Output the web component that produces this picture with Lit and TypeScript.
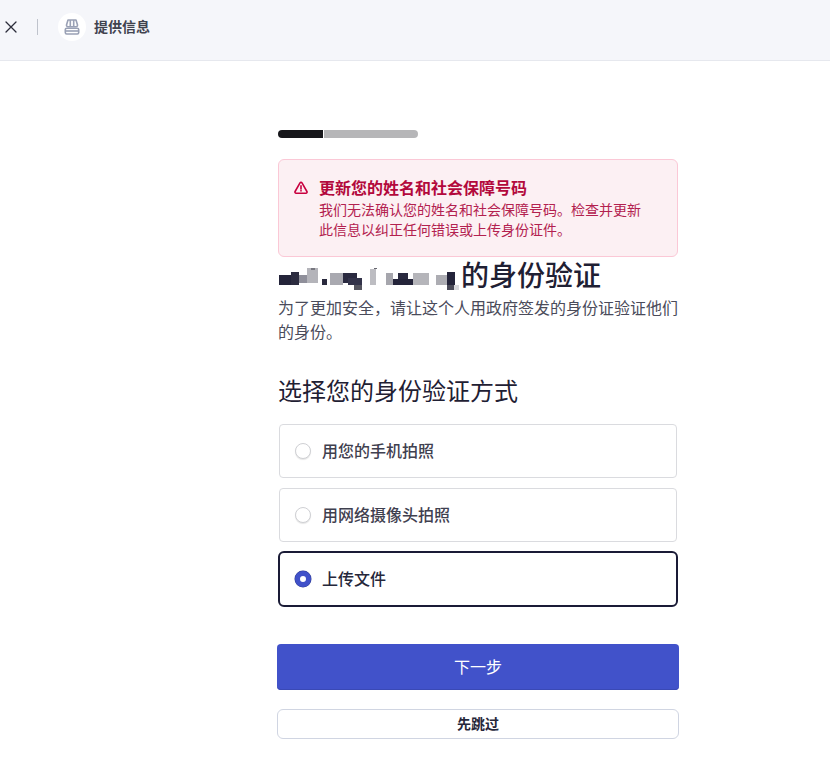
import { LitElement, html, css, svg } from "lit";
import { customElement } from "lit/decorators.js";

const mosaic: [number, number, number, number, string][] = [
  [1, 7, 12, 10, "#24243a"], [13, 4, 8, 13, "#2c2c40"], [21, 7, 8, 8, "#8f8f9a"],
  [29, 0, 11, 15, "#b4b4ba"], [33, 0, 4, 2, "#77777f"], [44, 11, 5, 6, "#2a2a3e"],
  [52, 5, 13, 12, "#a9a9b0"], [65, 5, 14, 10, "#2a2a40"], [70, 10, 14, 7, "#33334a"],
  [76, 17, 8, 5, "#55555f"], [92, 1, 6, 16, "#bdbdc2"], [96, 0, 3, 1, "#66666f"],
  [108, 5, 7, 12, "#a6a6ad"], [115, 11, 20, 6, "#24243a"], [120, 5, 10, 6, "#2a2a40"],
  [135, 5, 16, 12, "#b5b5ba"], [158, 7, 11, 10, "#adadb3"], [169, 4, 8, 13, "#24243a"],
  [169, 17, 7, 5, "#4a4a58"], [176, 17, 5, 5, "#d8d8dc"],
];

@customElement("app-root")
export class AppRoot extends LitElement {
  static styles = css`
    :host {
      display: block;
      min-height: 780px;
      background: #fff;
      color: #1a1b36;
      font-family: "Noto Sans CJK SC", "Noto Sans", sans-serif;
    }
    .top {
      height: 54px;
      padding: 0 0 6px 5px;
      background: #f5f6fa;
      border-bottom: 1px solid #e6e8ee;
      display: flex;
      align-items: center;
    }
    .close { display: block; width: 12px; height: 12px; }
    .sep { width: 1px; height: 16px; background: #bfc3cc; margin: 0 20px 0 20px; }
    .avatar {
      width: 28px; height: 28px; border-radius: 50%; background: #fff;
      display: flex; align-items: center; justify-content: center; margin-right: 8px;
    }
    .top-title { font-size: 14px; font-weight: 600; color: #41434f; line-height: 20px; margin-bottom: 2px; }
    main {
      width: 402px;
      margin-left: 277px;
      padding-top: 69px;
      display: flex;
      flex-direction: column;
    }
    .inner { padding: 0 1px; display: flex; flex-direction: column; }
    .progress { display: flex; width: 140px; height: 8px; gap: 1px; }
    .progress .done { width: 45px; background: #17171b; border-radius: 4px 0 0 4px; }
    .progress .rest { flex: 1; background: #b6b6b8; border-radius: 0 4px 4px 0; }
    .alert {
      margin-top: 21px;
      height: 98px;
      box-sizing: border-box;
      background: #fcf0f3;
      border: 1px solid #fbc8d6;
      border-radius: 6px;
      padding: 17px 30px 0 15px;
      display: flex;
      gap: 11px;
    }
    .alert svg { flex: none; margin-top: 4px; }
    .alert-title { font-size: 16px; font-weight: 600; line-height: 20px; color: #b3093c; }
    .alert-body { font-size: 14px; line-height: 20px; margin-top: 2px; color: #b3214f; }
    .heading {
      display: flex; align-items: flex-start; height: 36px;
      font-size: 28px; font-weight: 500; line-height: 36px; color: #1f2033;
    }
    .heading span { margin-top: -1px; }
    .mosaic { flex: none; margin-top: 11px; filter: blur(0.6px); }
    .desc { margin: 2px 0 0; font-size: 16px; line-height: 24px; color: #4a4b5a; }
    .sub {
      margin: 31px 0 0; font-size: 24px; font-weight: 400; line-height: 32px; color: #1f2033;
    }
    .options { display: flex; flex-direction: column; margin-top: 18px; }
    .opt {
      height: 54px; box-sizing: border-box; margin: 0 1px 10px;
      border: 1px solid #dadbdf; border-radius: 4px;
      display: flex; align-items: center; padding-left: 15px; gap: 11px;
      font-size: 16px; font-weight: 500; color: #3f404f;
    }
    .opt .label { margin-bottom: 2px; }
    .opt.sel {
      height: 56px; margin: -1px 0 0; border: 2px solid #1a1b36; border-radius: 6px; padding-left: 15px;
      color: #26273a;
    }
    .radio {
      width: 16px; height: 16px; box-sizing: border-box; border-radius: 50%;
      border: 1px solid #cfd0d4; background: #fff; box-shadow: 0 1px 1px rgba(0,0,0,.1);
    }
    .sel .radio { border: 5px solid #4051c9; box-shadow: 0 0 0 .5px #2f3a8f; }
    button { font-family: inherit; display: block; width: 100%; cursor: pointer; }
    .next {
      margin-top: 37px; height: 46px; border: 0; border-radius: 4px;
      background: #4152ca; color: #fff; font-size: 16px; font-weight: 400; padding: 0 0 2px;
      box-shadow: inset 0 -1px 0 #3a49b5;
    }
    .skip {
      margin-top: 19px; height: 30px; border: 1px solid #d0d5e2; border-radius: 6px;
      background: #fff; color: #26273a; font-size: 14px; font-weight: 600; padding: 0 0 2px;
    }
  `;

  render() {
    return html`
      <div class="top">
        <svg class="close" viewBox="0 0 12 12" fill="none" stroke="#2b2c3a" stroke-width="1.3" stroke-linecap="round">
          <path d="M1 1l10 10M11 1L1 11" />
        </svg>
        <div class="sep"></div>
        <div class="avatar">
          <svg width="16" height="16" viewBox="0 0 16 16" fill="none" stroke="#9aa1b5" stroke-width="1.6" stroke-linejoin="round">
            <path d="M4 1h8l1.5 5a1.6 1.6 0 0 1-1.6 1.8H4.1A1.6 1.6 0 0 1 2.5 6z" />
            <path d="M6.3 1v6.8M9.7 1v6.8" />
            <rect x="1.3" y="9.2" width="13.4" height="5.8" rx="1.4" />
            <path d="M1.5 12h13" />
          </svg>
        </div>
        <div class="top-title">提供信息</div>
      </div>
      <main>
        <div class="inner">
          <div class="progress"><div class="done"></div><div class="rest"></div></div>
          <div class="alert">
            <svg width="14" height="14" viewBox="0 0 14 14" fill="none">
              <path d="M6 1.9a1.2 1.2 0 0 1 2 0l4.9 8.6a1.2 1.2 0 0 1-1 1.8H2.1a1.2 1.2 0 0 1-1-1.8z" stroke="#c8003f" stroke-width="1.6" stroke-linejoin="round" />
              <path d="M7 4.8v3.2M7 9.6v.4" stroke="#c8003f" stroke-width="1.6" stroke-linecap="round" />
            </svg>
            <div>
              <div class="alert-title">更新您的姓名和社会保障号码</div>
              <div class="alert-body">我们无法确认您的姓名和社会保障号码。检查并更新此信息以纠正任何错误或上传身份证件。</div>
            </div>
          </div>
          <div class="heading">
            <svg class="mosaic" width="183" height="24" viewBox="0 0 183 24" shape-rendering="crispEdges">
              ${mosaic.map(([x, y, w, h, c]) => svg`<rect x=${x} y=${y} width=${w} height=${h} fill=${c} />`)}
            </svg>
            <span>的身份验证</span>
          </div>
          <p class="desc">为了更加安全，请让这个人用政府签发的身份证验证他们的身份。</p>
          <h2 class="sub">选择您的身份验证方式</h2>
          <div class="options">
            <div class="opt"><span class="radio"></span><span class="label">用您的手机拍照</span></div>
            <div class="opt"><span class="radio"></span><span class="label">用网络摄像头拍照</span></div>
            <div class="opt sel"><span class="radio"></span><span class="label">上传文件</span></div>
          </div>
        </div>
        <button class="next">下一步</button>
        <button class="skip">先跳过</button>
      </main>
    `;
  }
}
